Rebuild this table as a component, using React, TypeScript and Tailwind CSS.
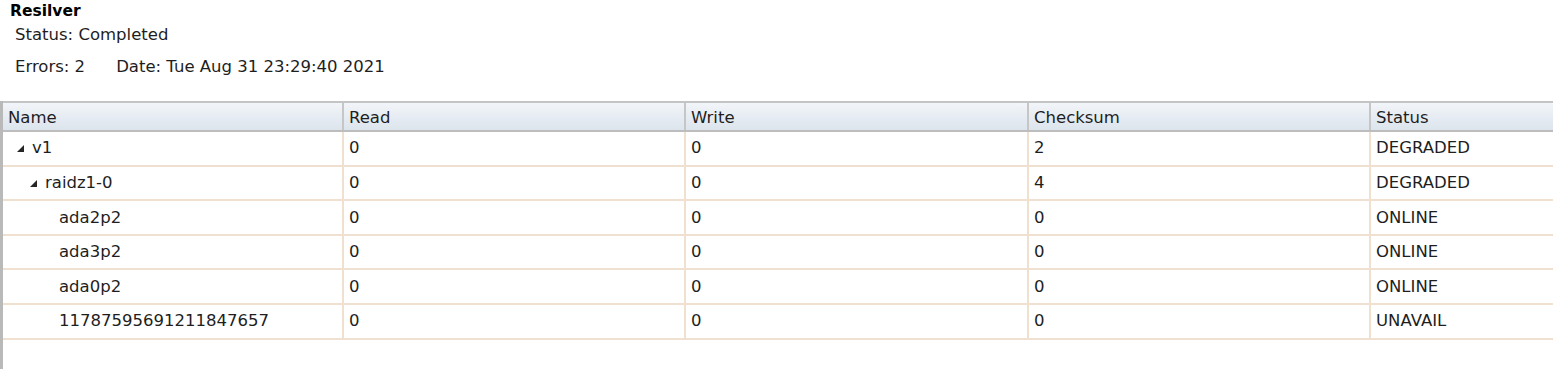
import React from "react";

type Row = {
  name: string;
  depth: number;
  expandable?: boolean;
  read: string;
  write: string;
  checksum: string;
  status: string;
};

const rows: Row[] = [
  { name: "v1", depth: 0, expandable: true, read: "0", write: "0", checksum: "2", status: "DEGRADED" },
  { name: "raidz1-0", depth: 1, expandable: true, read: "0", write: "0", checksum: "4", status: "DEGRADED" },
  { name: "ada2p2", depth: 2, read: "0", write: "0", checksum: "0", status: "ONLINE" },
  { name: "ada3p2", depth: 2, read: "0", write: "0", checksum: "0", status: "ONLINE" },
  { name: "ada0p2", depth: 2, read: "0", write: "0", checksum: "0", status: "ONLINE" },
  { name: "11787595691211847657", depth: 2, read: "0", write: "0", checksum: "0", status: "UNAVAIL" },
];

const indent = ["pl-[14px]", "pl-[27px]", "pl-[56px]"];

function Arrow() {
  return (
    <svg width="7" height="7" viewBox="0 0 7 7" className="mr-[8px] shrink-0">
      <polygon points="7,0 7,7 0,7" fill="#262626" />
    </svg>
  );
}

export default function App() {
  return (
    <div className="h-[369px] w-[1553px] overflow-hidden bg-white font-['DejaVu_Sans',Verdana,sans-serif] text-[16.5px] text-[#1e1e1e]">
      <div className="px-[10px] pt-[1px]">
        <div className="text-[15.5px] font-bold leading-[20px] text-black">Resilver</div>
        <div className="pl-[5px] pt-[4px] leading-[20px]">Status: Completed</div>
        <div className="flex gap-[31px] pl-[5px] pt-[12px] leading-[20px]">
          <span>Errors: 2</span>
          <span>Date: Tue Aug 31 23:29:40 2021</span>
        </div>
      </div>

      <div className="mt-[24px] h-[300px] border-l-[3px] border-[#b9b9b9]">
        <div className="w-[1800px]">
          <div className="flex h-[31px] border-y-2 border-t-[#c4c4c4] border-b-[#bdbdbd] bg-gradient-to-b from-[#f2f5f9] to-[#dce4ed] pt-[3px]">
            <div className="-mt-[3px] flex w-[341px] items-center border-r-2 border-[#c6c6c6] pl-[5px] pt-[3px]">Name</div>
            <div className="-mt-[3px] flex w-[342px] items-center border-r-2 border-[#c6c6c6] pl-[5px] pt-[3px]">Read</div>
            <div className="-mt-[3px] flex w-[343px] items-center border-r-2 border-[#c6c6c6] pl-[5px] pt-[3px]">Write</div>
            <div className="-mt-[3px] flex w-[342px] items-center border-r-2 border-[#c6c6c6] pl-[5px] pt-[3px]">Checksum</div>
            <div className="-mt-[3px] flex flex-1 items-center pl-[5px] pt-[3px]">Status</div>
          </div>
          {rows.map((r) => (
            <div key={r.name} className="flex h-[34.6px] border-b-2 border-[#efe0d0]">
              <div className={`flex w-[341px] items-center border-r-2 border-[#efe0d0] pt-[1px] ${indent[r.depth]}`}>
                {r.expandable ? <Arrow /> : null}
                {r.name}
              </div>
              <div className="flex w-[342px] items-center border-r-2 border-[#efe0d0] pl-[5px] pt-[1px]">{r.read}</div>
              <div className="flex w-[343px] items-center border-r-2 border-[#efe0d0] pl-[5px] pt-[1px]">{r.write}</div>
              <div className="flex w-[342px] items-center border-r-2 border-[#efe0d0] pl-[5px] pt-[1px]">{r.checksum}</div>
              <div className="flex flex-1 items-center pl-[5px] pt-[1px]">{r.status}</div>
            </div>
          ))}
        </div>
      </div>
    </div>
  );
}
